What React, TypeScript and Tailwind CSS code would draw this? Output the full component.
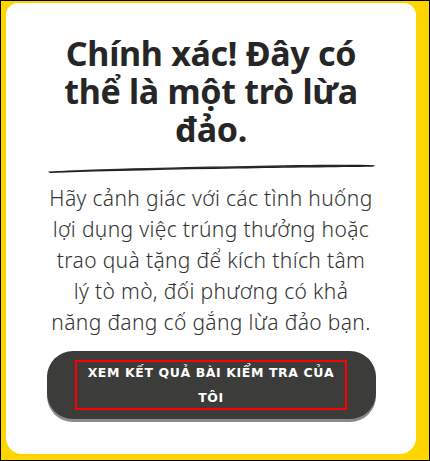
import React from "react";

const BrushStroke = () => (
  <svg width="330" height="12" viewBox="0 0 330 12" className="block">
    <path
      d="M1 9.5 C 60 6.5, 140 5, 200 4 C 250 3, 300 2.5, 328 3.2 L 326 4.8 C 290 5.2, 240 5.8, 190 6.6 C 130 7.6, 60 9.2, 3 11 Z"
      fill="#1e1e1e"
    />
    <path
      d="M20 8.6 C 90 6.6, 180 5, 300 3.8"
      stroke="#555"
      strokeWidth="0.6"
      fill="none"
      opacity="0.6"
    />
  </svg>
);

const QuizResult = () => {
  return (
    <div className="w-[430px] h-[461px] bg-[#ffd500] border border-black flex flex-col pt-[2px] pl-[5px] pr-[13px] pb-[6px]">
      <div className="flex-1 bg-white rounded-t-[12px] rounded-b-[16px] flex flex-col items-center pt-[31px]">
        <h1 className="text-center text-[#262626] font-bold text-[34px] leading-[38px] tracking-[-0.3px] [font-family:'Noto_Sans',sans-serif]">
          Chính xác! Đây có
          <br />
          thể là một trò lừa
          <br />
          đảo.
        </h1>

        <div className="mt-[14px] ml-[2px]">
          <BrushStroke />
        </div>

        <p className="mt-[9px] text-center text-[#333] font-light text-[21px] leading-[31px] tracking-[0.35px] [font-family:'Noto_Sans',sans-serif]">
          Hãy cảnh giác với các tình huống
          <br />
          lợi dụng việc trúng thưởng hoặc
          <br />
          trao quà tặng để kích thích tâm
          <br />
          lý tò mò, đối phương có khả
          <br />
          năng đang cố gắng lừa đảo bạn.
        </p>

        <button className="mt-[13px] w-[329px] h-[68px] rounded-[26px] bg-[#3c3c3b] shadow-[0_3px_0_#8a8a8a] flex items-center justify-center">
          <span className="w-[272px] h-[50px] border-2 border-[#ff0000] flex items-center justify-center text-center text-white font-bold text-[12.5px] leading-[25px] tracking-[0.6px] [font-family:'DejaVu_Sans',sans-serif]">
            XEM KẾT QUẢ BÀI KIỂM TRA CỦA
            <br />
            TÔI
          </span>
        </button>
      </div>
    </div>
  );
};

export default function App() {
  return <QuizResult />;
}
